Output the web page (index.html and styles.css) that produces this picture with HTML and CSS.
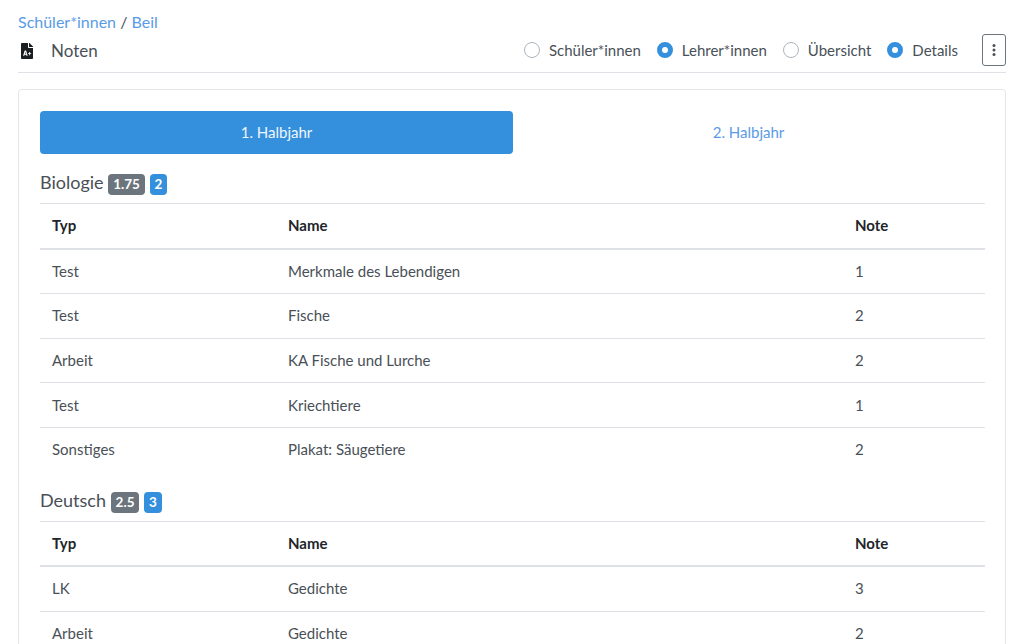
FILE: index.html
```html
<!DOCTYPE html>
<html lang="de">
<head>
  <meta charset="UTF-8">
  <title>Noten</title>
  <link rel="stylesheet" href="styles.css">
</head>
<body>
  <main class="page">
    <header class="top">
      <div class="top-left">
        <div class="crumbs"><a href="#">Schüler*innen</a> / <a href="#">Beil</a></div>
        <h1 class="title">
          <svg class="title-icon" viewBox="0 0 384 512" width="12" height="16"><path fill="#1b1e21" d="M224 136V0H24C10.700 0 0 10.700 0 24v464c0 13.300 10.700 24 24 24h336c13.300 0 24-10.700 24-24V160H248c-13.200 0-24-10.800-24-24zM384 121.900c0-6.300-2.500-12.400-7-16.900L279.100 7c-4.500-4.500-10.600-7-17-7H256v128h128z"/><path fill="#fff" d="M118 240h44l52 170h-40l-9-34h-50l-9 34H66zm8 106h32l-16-62zM262 290h28v36h36v28h-36v36h-28v-36h-36v-28h36z"/></svg>
          Noten
        </h1>
      </div>
      <div class="top-right">
        <label class="radio radio-who"><span class="dot"></span>Schüler*innen</label>
        <label class="radio radio-who"><span class="dot on"></span>Lehrer*innen</label>
        <label class="radio radio-view"><span class="dot"></span>Übersicht</label>
        <label class="radio"><span class="dot on"></span>Details</label>
        <button class="more" type="button">
          <svg viewBox="0 0 4 14" width="4" height="14"><circle cx="2" cy="2.500" r="1.500" fill="#4a5056"/><circle cx="2" cy="7" r="1.500" fill="#4a5056"/><circle cx="2" cy="11.500" r="1.500" fill="#4a5056"/></svg>
        </button>
      </div>
    </header>

    <section class="card">
      <nav class="tabs">
        <a class="tab active" href="#">1. Halbjahr</a>
        <a class="tab" href="#">2. Halbjahr</a>
      </nav>

      <h2 class="subject">Biologie <span class="badge grey">1.75</span> <span class="badge blue">2</span></h2>
      <table class="grades">
        <colgroup><col class="col-typ"><col class="col-name"><col></colgroup>
        <thead><tr><th>Typ</th><th>Name</th><th>Note</th></tr></thead>
        <tbody>
          <tr><td>Test</td><td>Merkmale des Lebendigen</td><td>1</td></tr>
          <tr><td>Test</td><td>Fische</td><td>2</td></tr>
          <tr><td>Arbeit</td><td>KA Fische und Lurche</td><td>2</td></tr>
          <tr><td>Test</td><td>Kriechtiere</td><td>1</td></tr>
          <tr><td>Sonstiges</td><td>Plakat: Säugetiere</td><td>2</td></tr>
        </tbody>
      </table>

      <h2 class="subject">Deutsch <span class="badge grey">2.5</span> <span class="badge blue">3</span></h2>
      <table class="grades">
        <colgroup><col class="col-typ"><col class="col-name"><col></colgroup>
        <thead><tr><th>Typ</th><th>Name</th><th>Note</th></tr></thead>
        <tbody>
          <tr><td>LK</td><td>Gedichte</td><td>3</td></tr>
          <tr><td>Arbeit</td><td>Gedichte</td><td>2</td></tr>
        </tbody>
      </table>
    </section>
  </main>
</body>
</html>
```

FILE: styles.css
```css
* { box-sizing: border-box; }

html, body {
  height: 100%;
  overflow: hidden;
}

body {
  margin: 0;
  background: #fff;
  color: #495057;
  font-family: "Lato", "Liberation Sans", sans-serif;
  font-size: 15px;
  line-height: 23px;
}

a {
  color: #5a9be6;
  text-decoration: none;
}

.page {
  padding: 10px 18px 0;
}

/* Header */

.top {
  display: flex;
  justify-content: space-between;
  align-items: flex-end;
  height: 63px;
  padding-bottom: 6px;
  border-bottom: 1px solid #dee2e6;
}

.crumbs {
  font-size: 16px;
}

.title {
  display: flex;
  align-items: center;
  margin: 6px 0 3px;
  font-size: 17px;
  font-weight: 400;
  line-height: 24px;
}

.title-icon {
  margin: 0 18px 0 3px;
}

.top-right {
  display: flex;
  align-items: center;
}

.radio {
  display: flex;
  align-items: center;
  margin-right: 16px;
}

.radio-who { margin-right: 16px; }
.radio-view { margin-right: 16px; }

.dot {
  width: 16px;
  height: 16px;
  margin-right: 9px;
  border: 1px solid #adb5bd;
  border-radius: 50%;
  background: #fff;
}

.dot.on {
  border: 5px solid #3490dc;
}

.more {
  display: flex;
  align-items: center;
  justify-content: center;
  width: 24px;
  height: 32px;
  margin-left: 8px;
  padding: 0;
  border: 1px solid #6c757d;
  border-radius: 3px;
  background: #fff;
}

/* Card */

.card {
  margin-top: 16px;
  padding: 21px 21px 0;
  border: 1px solid #e4e7ea;
  border-radius: 4px;
}

.tabs {
  display: grid;
  grid-template-columns: 473px 1fr;
}

.tab {
  height: 43px;
  line-height: 43px;
  text-align: center;
  border-radius: 4px;
}

.tab.active {
  background: #3490dc;
  color: #f0f6fc;
}

.subject {
  margin: 16px 0 8px;
  font-size: 18px;
  font-weight: 400;
  line-height: 24px;
}

.badge {
  display: inline-block;
  padding: 0 5px;
  border-radius: 4px;
  color: #fff;
  font-size: 13.500px;
  font-weight: 700;
  line-height: 21px;
  vertical-align: 0;
}

.grey { background: #6c757d; }
.blue { background: #3490dc; }

/* Tables */

.grades {
  width: 945px;
  margin-bottom: 16px;
  border-collapse: collapse;
  table-layout: fixed;
}

.col-typ { width: 236px; }
.col-name { width: 567px; }

.grades th,
.grades td {
  padding: 10.300px 12px;
  border-top: 1px solid #dee2e6;
  text-align: left;
}

.grades th {
  border-bottom: 2px solid #dee2e6;
  color: #212529;
  font-weight: 700;
}
```
